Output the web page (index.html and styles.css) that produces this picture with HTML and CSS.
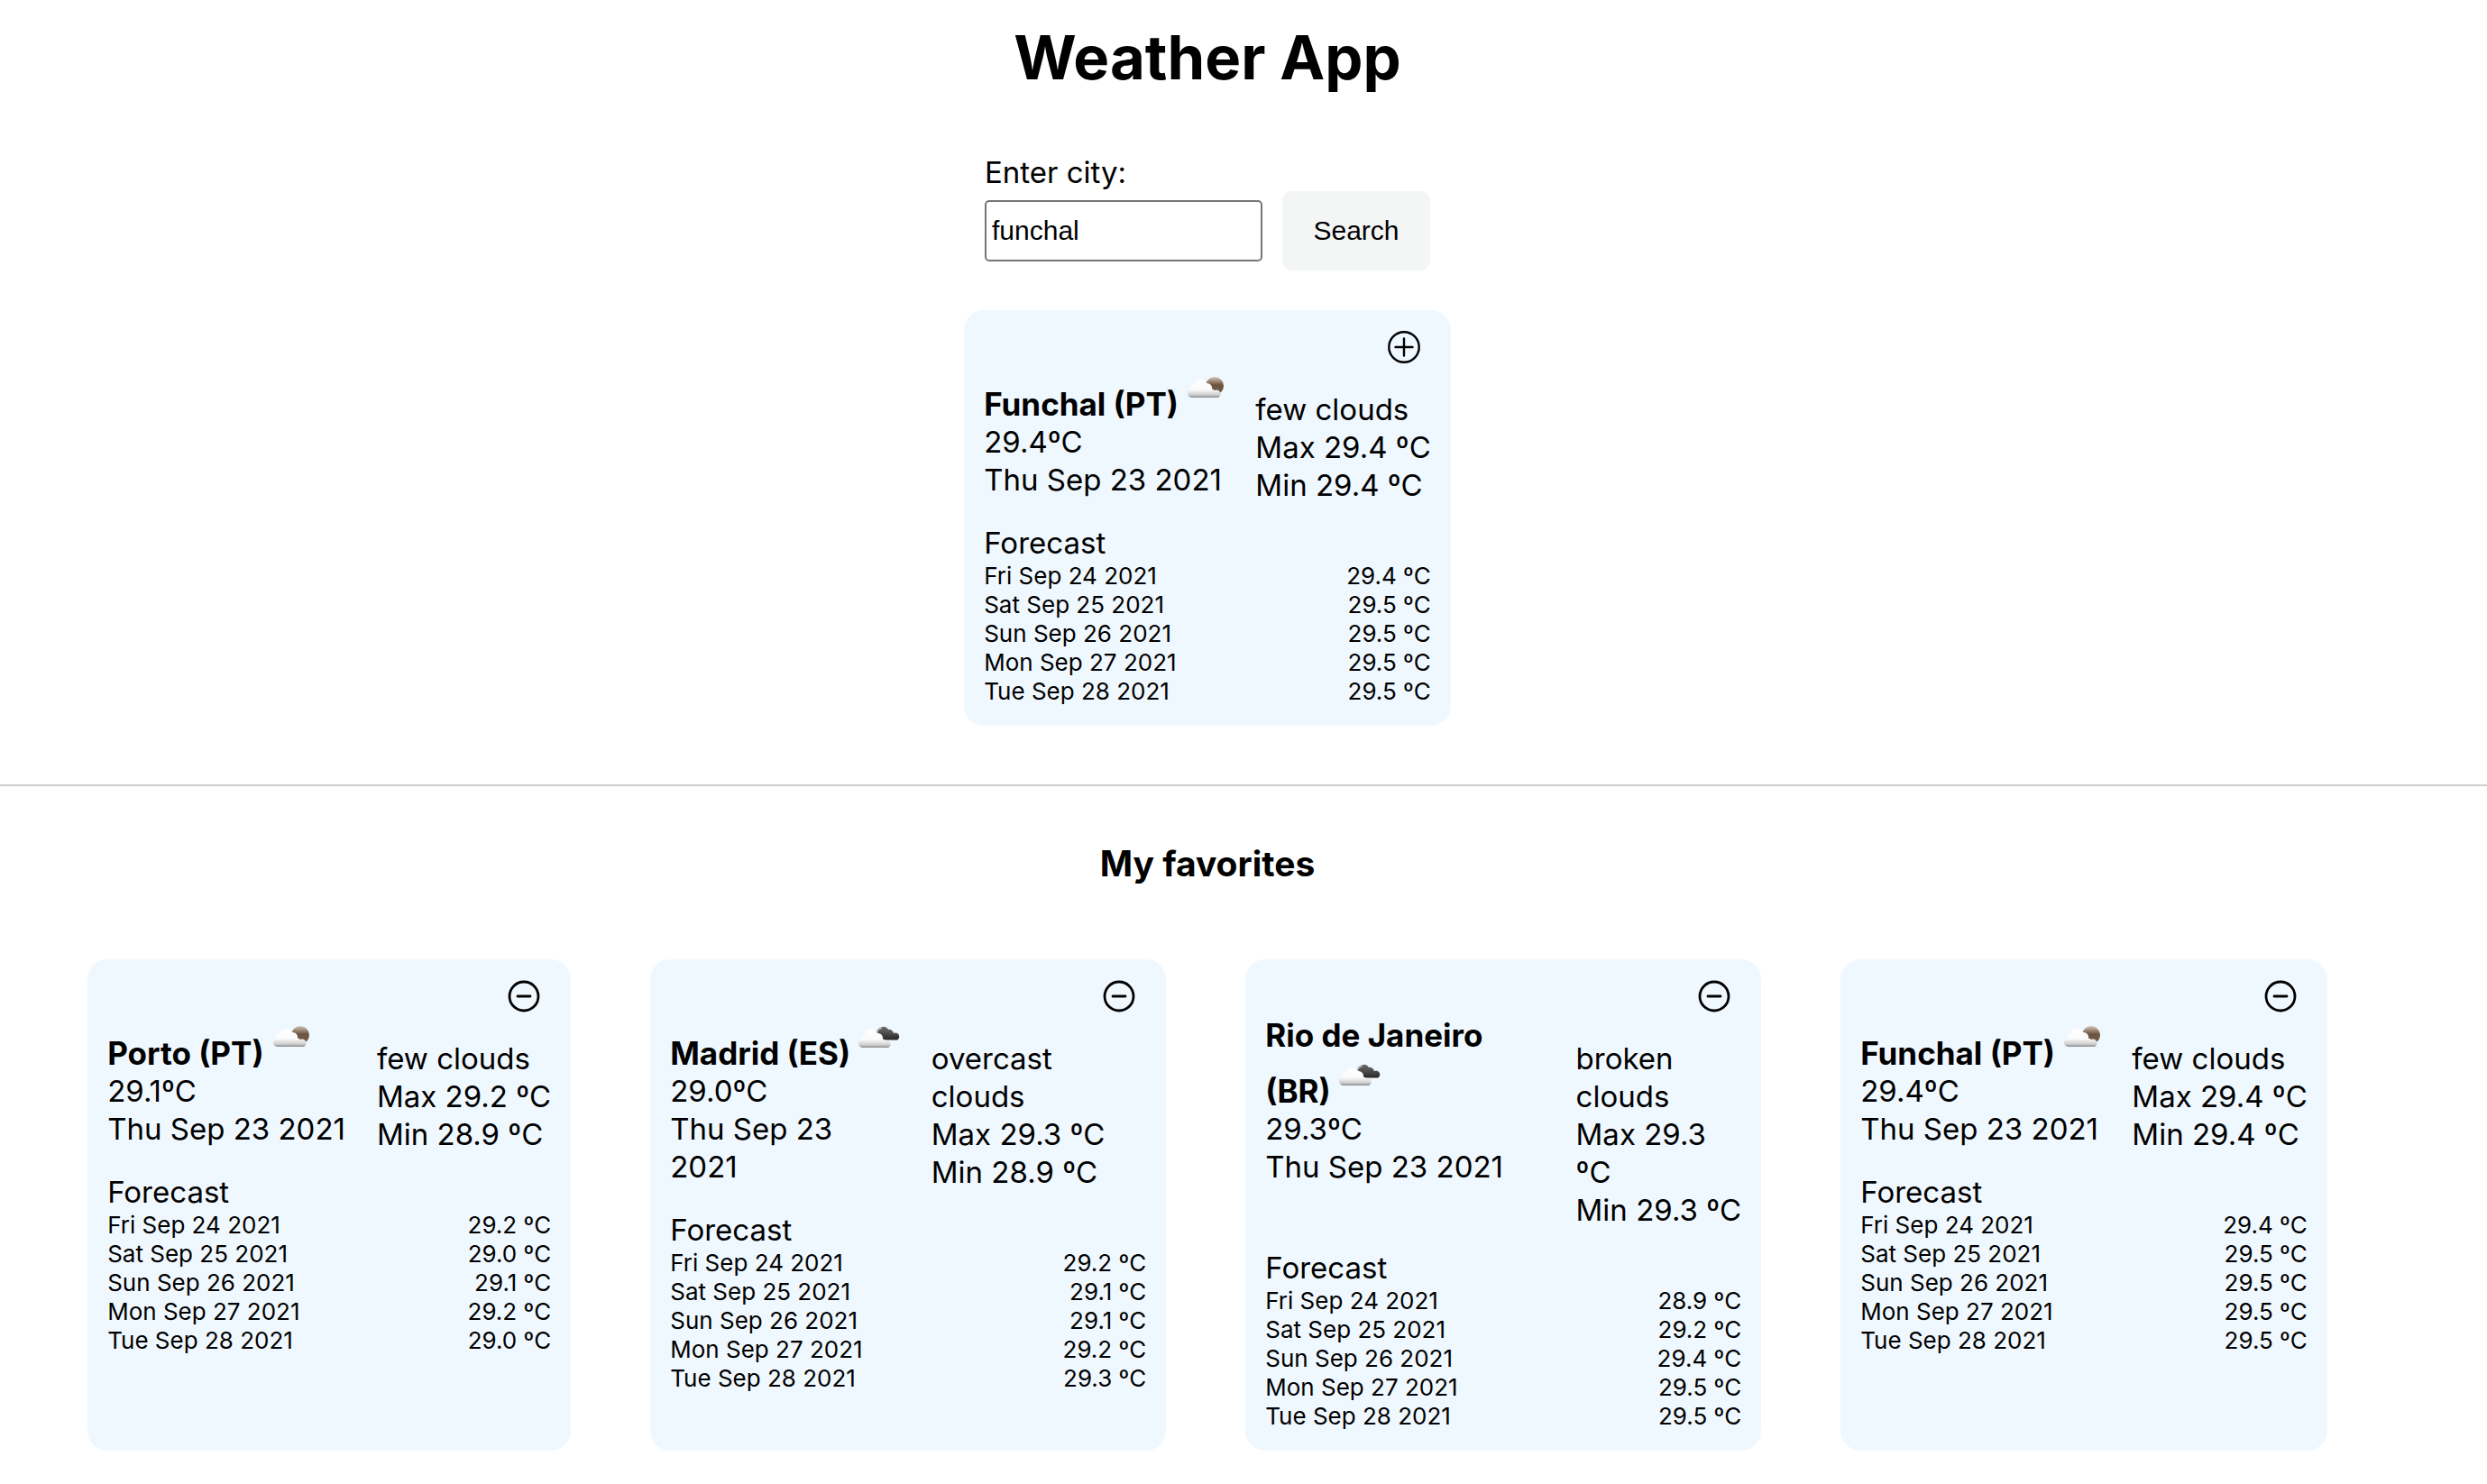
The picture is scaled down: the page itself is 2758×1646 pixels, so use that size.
FILE: index.html
```html
<!DOCTYPE html>
<html lang="en">
<head>
  <meta charset="utf-8">
  <meta name="viewport" content="width=device-width, initial-scale=1">
  <title>Weather App</title>
  <link rel="stylesheet" href="styles.css">
</head>
<body>
  <svg class="sprite" aria-hidden="true">
    <defs>
      <linearGradient id="cloud-fill" x1="0" y1="0" x2="0" y2="1">
        <stop offset="0" stop-color="#ffffff"/>
        <stop offset="0.55" stop-color="#fbfbfb"/>
        <stop offset="0.85" stop-color="#cfcfcf"/>
        <stop offset="1" stop-color="#8a8a8a"/>
      </linearGradient>
      <linearGradient id="sun-fill" x1="0" y1="0" x2="0" y2="1">
        <stop offset="0" stop-color="#d3c6ba"/>
        <stop offset="0.3" stop-color="#8f7a66"/>
        <stop offset="0.45" stop-color="#6b5440"/>
        <stop offset="1" stop-color="#76614e"/>
      </linearGradient>
      <linearGradient id="dark-fill" x1="0" y1="0" x2="0" y2="1">
        <stop offset="0" stop-color="#6a6a6a"/>
        <stop offset="0.5" stop-color="#4c4c4c"/>
        <stop offset="1" stop-color="#262626"/>
      </linearGradient>
      <symbol id="few-clouds" viewBox="0 0 42 54" overflow="visible">
        <circle cx="32" cy="21" r="10" fill="url(#sun-fill)"/>
        <path d="M6 34a5 5 0 0 1-1-9.500a4 4 0 0 1 4-4.500a7.500 7.500 0 0 1 14-2a5.500 5.500 0 0 1 6 6.500a4 4 0 0 1 3 1.500a4 4 0 0 1 4 8z" fill="url(#cloud-fill)"/>
      </symbol>
      <symbol id="broken-clouds" viewBox="0 0 42 54" overflow="visible">
        <path d="M22 19a6.500 6.500 0 0 1 12-4a5 5 0 0 1 6 4a4 4 0 0 1 4 7.500h-16z" fill="url(#dark-fill)"/>
        <path d="M21 20a7 7 0 0 1 6-7" fill="none" stroke="#b4b4b4" stroke-width="2"/>
        <path d="M5 35a5 5 0 0 1-1-9.500a4 4 0 0 1 4-4.500a7.500 7.500 0 0 1 14-2a5.500 5.500 0 0 1 6 6.500a4 4 0 0 1 3 1.500a4 4 0 0 1 3 8z" fill="url(#cloud-fill)"/>
      </symbol>
      <symbol id="plus" viewBox="0 0 36 36">
        <path d="M18 1.300a16.700 16.700 0 1 0 0 33.400a16.700 16.700 0 1 0 0-33.400zM8.500 18h19M18 8.500v19" fill="none" stroke="#000" stroke-width="2.400" stroke-linecap="round"/>
      </symbol>
      <symbol id="minus" viewBox="0 0 36 36">
        <path d="M18 2a16 16 0 1 0 0 32a16 16 0 1 0 0-32zM11 18h14" fill="none" stroke="#000" stroke-width="2.800" stroke-linecap="round"/>
      </symbol>
    </defs>
  </svg>

  <main class="app">
    <section class="search">
      <h1 class="title">Weather App</h1>
      <form class="form">
        <label class="form-label" for="city">Enter city:</label>
        <div class="form-row">
          <input class="form-input" id="city" type="text" value="funchal">
          <button class="form-button" type="submit">Search</button>
        </div>
      </form>
      <article class="card">
        <button class="card-action" type="button" aria-label="Add to favorites"><svg class="action-icon"><use href="#plus"/></svg></button>
        <div class="summary">
          <div class="now">
            <h3 class="city">Funchal (PT) <svg class="sky"><use href="#few-clouds"/></svg></h3>
            <p>29.4ºC</p>
            <p>Thu Sep 23 2021</p>
          </div>
          <div class="details">
            <p>few clouds</p>
            <p>Max 29.4 ºC</p>
            <p class="low">Min 29.4 ºC</p>
          </div>
        </div>
        <table class="forecast">
          <caption>Forecast</caption>
          <tr><th scope="row">Fri Sep 24 2021</th><td>29.4 ºC</td></tr>
          <tr><th scope="row">Sat Sep 25 2021</th><td>29.5 ºC</td></tr>
          <tr><th scope="row">Sun Sep 26 2021</th><td>29.5 ºC</td></tr>
          <tr><th scope="row">Mon Sep 27 2021</th><td>29.5 ºC</td></tr>
          <tr><th scope="row">Tue Sep 28 2021</th><td>29.5 ºC</td></tr>
        </table>
      </article>
    </section>

    <section class="favorites">
      <h2 class="subtitle">My favorites</h2>
      <div class="cards">
        <article class="card">
          <button class="card-action" type="button" aria-label="Remove Porto"><svg class="action-icon"><use href="#minus"/></svg></button>
          <div class="summary">
            <div class="now">
              <h3 class="city">Porto (PT) <svg class="sky"><use href="#few-clouds"/></svg></h3>
              <p>29.1ºC</p>
              <p>Thu Sep 23 2021</p>
            </div>
            <div class="details">
              <p>few clouds</p>
              <p>Max 29.2 ºC</p>
              <p class="low">Min 28.9 ºC</p>
            </div>
          </div>
          <table class="forecast">
            <caption>Forecast</caption>
            <tr><th scope="row">Fri Sep 24 2021</th><td>29.2 ºC</td></tr>
            <tr><th scope="row">Sat Sep 25 2021</th><td>29.0 ºC</td></tr>
            <tr><th scope="row">Sun Sep 26 2021</th><td>29.1 ºC</td></tr>
            <tr><th scope="row">Mon Sep 27 2021</th><td>29.2 ºC</td></tr>
            <tr><th scope="row">Tue Sep 28 2021</th><td>29.0 ºC</td></tr>
          </table>
        </article>

        <article class="card">
          <button class="card-action" type="button" aria-label="Remove Madrid"><svg class="action-icon"><use href="#minus"/></svg></button>
          <div class="summary">
            <div class="now">
              <h3 class="city">Madrid (ES) <svg class="sky"><use href="#broken-clouds"/></svg></h3>
              <p>29.0ºC</p>
              <p>Thu Sep 23 2021</p>
            </div>
            <div class="details">
              <p>overcast clouds</p>
              <p>Max 29.3 ºC</p>
              <p class="low">Min 28.9 ºC</p>
            </div>
          </div>
          <table class="forecast">
            <caption>Forecast</caption>
            <tr><th scope="row">Fri Sep 24 2021</th><td>29.2 ºC</td></tr>
            <tr><th scope="row">Sat Sep 25 2021</th><td>29.1 ºC</td></tr>
            <tr><th scope="row">Sun Sep 26 2021</th><td>29.1 ºC</td></tr>
            <tr><th scope="row">Mon Sep 27 2021</th><td>29.2 ºC</td></tr>
            <tr><th scope="row">Tue Sep 28 2021</th><td>29.3 ºC</td></tr>
          </table>
        </article>

        <article class="card">
          <button class="card-action" type="button" aria-label="Remove Rio de Janeiro"><svg class="action-icon"><use href="#minus"/></svg></button>
          <div class="summary">
            <div class="now">
              <h3 class="city">Rio de Janeiro (BR) <svg class="sky"><use href="#broken-clouds"/></svg></h3>
              <p>29.3ºC</p>
              <p>Thu Sep 23 2021</p>
            </div>
            <div class="details">
              <p>broken clouds</p>
              <p>Max 29.3 ºC</p>
              <p class="low">Min 29.3 ºC</p>
            </div>
          </div>
          <table class="forecast">
            <caption>Forecast</caption>
            <tr><th scope="row">Fri Sep 24 2021</th><td>28.9 ºC</td></tr>
            <tr><th scope="row">Sat Sep 25 2021</th><td>29.2 ºC</td></tr>
            <tr><th scope="row">Sun Sep 26 2021</th><td>29.4 ºC</td></tr>
            <tr><th scope="row">Mon Sep 27 2021</th><td>29.5 ºC</td></tr>
            <tr><th scope="row">Tue Sep 28 2021</th><td>29.5 ºC</td></tr>
          </table>
        </article>

        <article class="card">
          <button class="card-action" type="button" aria-label="Remove Funchal"><svg class="action-icon"><use href="#minus"/></svg></button>
          <div class="summary">
            <div class="now">
              <h3 class="city">Funchal (PT) <svg class="sky"><use href="#few-clouds"/></svg></h3>
              <p>29.4ºC</p>
              <p>Thu Sep 23 2021</p>
            </div>
            <div class="details">
              <p>few clouds</p>
              <p>Max 29.4 ºC</p>
              <p class="low">Min 29.4 ºC</p>
            </div>
          </div>
          <table class="forecast">
            <caption>Forecast</caption>
            <tr><th scope="row">Fri Sep 24 2021</th><td>29.4 ºC</td></tr>
            <tr><th scope="row">Sat Sep 25 2021</th><td>29.5 ºC</td></tr>
            <tr><th scope="row">Sun Sep 26 2021</th><td>29.5 ºC</td></tr>
            <tr><th scope="row">Mon Sep 27 2021</th><td>29.5 ºC</td></tr>
            <tr><th scope="row">Tue Sep 28 2021</th><td>29.5 ºC</td></tr>
          </table>
        </article>
      </div>
    </section>
  </main>
</body>
</html>
```
FILE: styles.css
```css
* {
  box-sizing: border-box;
}

body,
h1,
h2,
h3,
p {
  margin: 0;
}

body {
  background: #fff;
  color: #000;
  font-family: Inter, "Liberation Sans", sans-serif;
  font-size: 33px;
  line-height: 42px;
}

.sprite {
  position: absolute;
  width: 0;
  height: 0;
}

.search,
.favorites {
  display: flex;
  flex-direction: column;
  align-items: center;
  padding-right: 80px;
}

.search {
  padding-top: 22px;
  padding-bottom: 65px;
  border-bottom: 2px solid #cecece;
}

.title {
  font-size: 67px;
  line-height: 84px;
  margin-bottom: 64px;
}

.form {
  margin-bottom: 44px;
}

.form-label {
  display: block;
}

.form-row {
  display: flex;
  align-items: center;
  gap: 22px;
}

.form-input,
.form-button {
  font-family: "Liberation Sans", Arial, sans-serif;
  font-size: 30px;
  color: #000;
}

.form-input {
  width: 308px;
  height: 68px;
  padding: 0 6px;
  border: 2px solid #767676;
  border-radius: 5px;
  background: #fff;
}

.form-button {
  width: 164px;
  height: 88px;
  padding: 0;
  border: 0;
  border-radius: 11px;
  background: #f4f6f6;
}

.card {
  max-width: 572px;
  padding: 22px;
  border-radius: 22px;
  background: #f0f8ff;
}

.card-action {
  display: block;
  height: 38px;
  margin-bottom: 3px;
  margin-left: auto;
  padding: 0 12px;
  border: 0;
  background: none;
}

.action-icon {
  display: block;
  width: 36px;
  height: 36px;
}

.summary {
  display: flex;
  gap: 35px;
  margin-bottom: 22px;
}

.details {
  margin-top: 26px;
}

.low {
  white-space: nowrap;
}

.city {
  font-size: 35px;
}

.sky {
  width: 42px;
  height: 54px;
  overflow: visible;
}

.forecast {
  width: 100%;
  border-collapse: collapse;
  font-size: 26px;
  line-height: 32px;
}

.forecast caption {
  font-size: 33px;
  line-height: 42px;
  text-align: left;
}

.forecast th,
.forecast td {
  padding: 0;
  font-weight: 400;
  text-align: left;
}

.forecast td {
  text-align: right;
}

.subtitle {
  margin: 62px 0 82px;
  font-size: 39px;
  line-height: 48px;
}

.cards {
  display: flex;
  justify-content: center;
  gap: 88px;
  padding-bottom: 38px;
}
```
